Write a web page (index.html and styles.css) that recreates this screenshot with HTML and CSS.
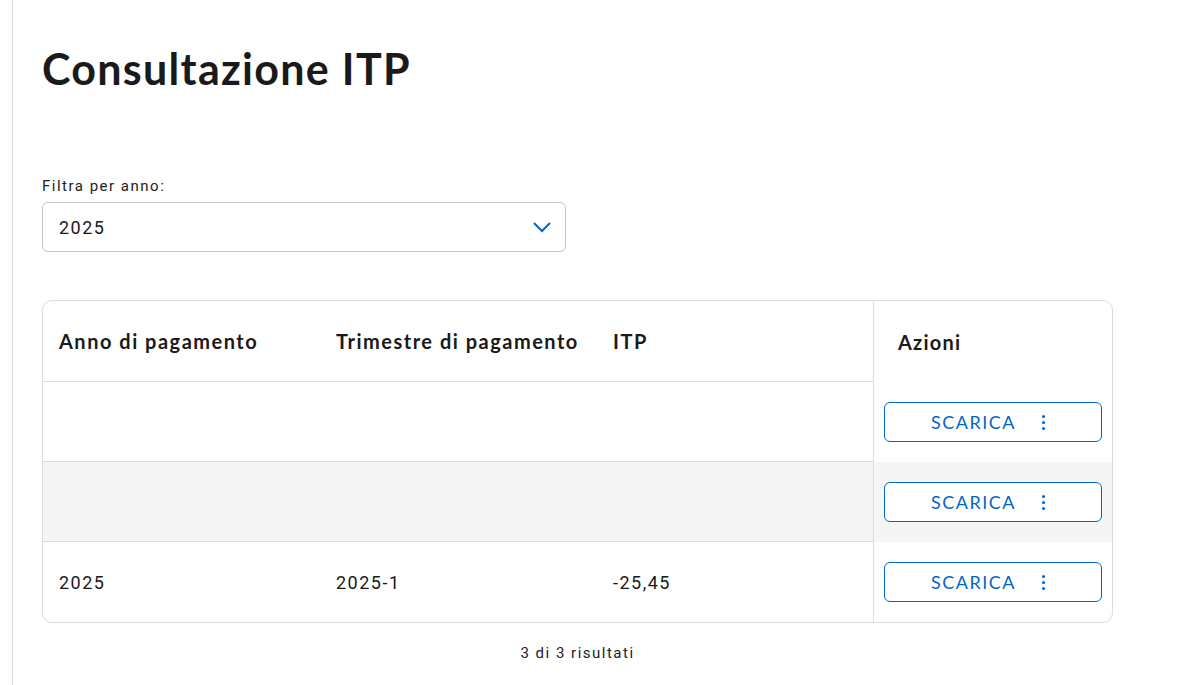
FILE: index.html
```html
<!DOCTYPE html>
<html lang="it">
<head>
<meta charset="utf-8">
<title>Consultazione ITP</title>
<link rel="stylesheet" href="styles.css">
</head>
<body>
<div class="page">
  <main class="content">
    <h1 class="title">Consultazione ITP</h1>
    <div class="filter">
      <label class="filter-label" for="anno">Filtra per anno:</label>
      <div class="select">
        <span class="select-value">2025</span>
        <svg class="chevron" width="20" height="12" viewBox="0 0 20 12" aria-hidden="true"><path d="M2 2 L10 10 L18 2" fill="none" stroke="#0066cc" stroke-width="2"/></svg>
      </div>
    </div>
    <div class="table">
      <div class="main-cols">
        <div class="row head">
          <div class="cell">Anno di pagamento</div>
          <div class="cell">Trimestre di pagamento</div>
          <div class="cell">ITP</div>
        </div>
        <div class="row"><div class="cell"></div><div class="cell"></div><div class="cell"></div></div>
        <div class="row alt"><div class="cell"></div><div class="cell"></div><div class="cell"></div></div>
        <div class="row last">
          <div class="cell">2025</div>
          <div class="cell">2025-1</div>
          <div class="cell">-25,45</div>
        </div>
      </div>
      <div class="actions">
        <div class="act-head">Azioni</div>
        <div class="act-cell"><button class="btn"><span>SCARICA</span><span class="kebab"><i></i><i></i><i></i></span></button></div>
        <div class="act-cell alt"><button class="btn"><span>SCARICA</span><span class="kebab"><i></i><i></i><i></i></span></button></div>
        <div class="act-cell"><button class="btn"><span>SCARICA</span><span class="kebab"><i></i><i></i><i></i></span></button></div>
      </div>
    </div>
    <p class="count">3 di 3 risultati</p>
  </main>
</div>
</body>
</html>
```
FILE: styles.css
```css
* { box-sizing: border-box; }
html, body { margin: 0; padding: 0; background: #fff; }
body { font-family: "Roboto", "Liberation Sans", sans-serif; color: #1a1a1a; }
.page { margin-left: 12px; border-left: 1px solid #d6d6d6; min-height: 685px; }
.content { padding: 43px 0 0 29px; width: 1100px; }
.title {
  margin: 0;
  font-family: "Lato", sans-serif;
  font-weight: 700;
  font-size: 43px;
  line-height: 52px;
  color: #1a1a1a;
  letter-spacing: 1.3px;
}
.filter { margin-top: 82px; width: 524px; }
.filter-label { display: block; font-size: 15px; line-height: 18px; color: #222; letter-spacing: 1.5px; margin-bottom: 7px; }
.select {
  height: 50px;
  border: 1px solid #c5c5c5;
  border-radius: 6px;
  display: flex;
  align-items: center;
  justify-content: space-between;
  padding: 0 13px 0 16px;
}
.select-value { font-size: 18px; letter-spacing: 1.5px; color: #1a1a1a; }
.table {
  margin-top: 48px;
  width: 1071px;
  border: 1px solid #dcdcdc;
  border-radius: 10px;
  display: flex;
  overflow: hidden;
}
.main-cols { flex: 0 0 830px; border-right: 1px solid #dcdcdc; }
.row { display: grid; grid-template-columns: 277px 277px 276px; height: 80px; border-bottom: 1px solid #dcdcdc; }
.row.head { height: 81px; }
.row.last { border-bottom: none; }
.row.alt { background: #f5f5f5; }
.cell { padding: 0 17px 0 16px; display: flex; align-items: center; font-size: 18px; letter-spacing: 1.5px; }
.head .cell {
  font-family: "Lato", sans-serif;
  font-weight: 700;
  font-size: 20px;
  letter-spacing: 1.5px;
}
.actions { flex: 1; display: flex; flex-direction: column; }
.act-head {
  height: 81px;
  display: flex;
  align-items: center;
  padding-left: 24px;
  font-family: "Lato", sans-serif;
  font-weight: 700;
  font-size: 20px;
  letter-spacing: 1.2px;
}
.act-cell { height: 80px; display: flex; align-items: center; padding: 0 10px; }
.act-cell.alt { background: #f5f5f5; }
.btn {
  width: 218px;
  height: 40px;
  border: 1px solid #0066cc;
  border-radius: 6px;
  background: #fff;
  color: #0066cc;
  font-family: "Lato", sans-serif;
  font-size: 18px;
  letter-spacing: 1.5px;
  display: flex;
  align-items: center;
  justify-content: center;
  gap: 26px;
  padding: 0 10px 0 0;
  cursor: pointer;
}
.kebab { display: flex; flex-direction: column; gap: 3px; }
.kebab i { display: block; width: 3px; height: 3px; border-radius: 50%; background: #0066cc; }
.count { margin: 21px 0 0; width: 1071px; text-align: center; font-size: 15px; letter-spacing: 1.5px; color: #222; }
```
